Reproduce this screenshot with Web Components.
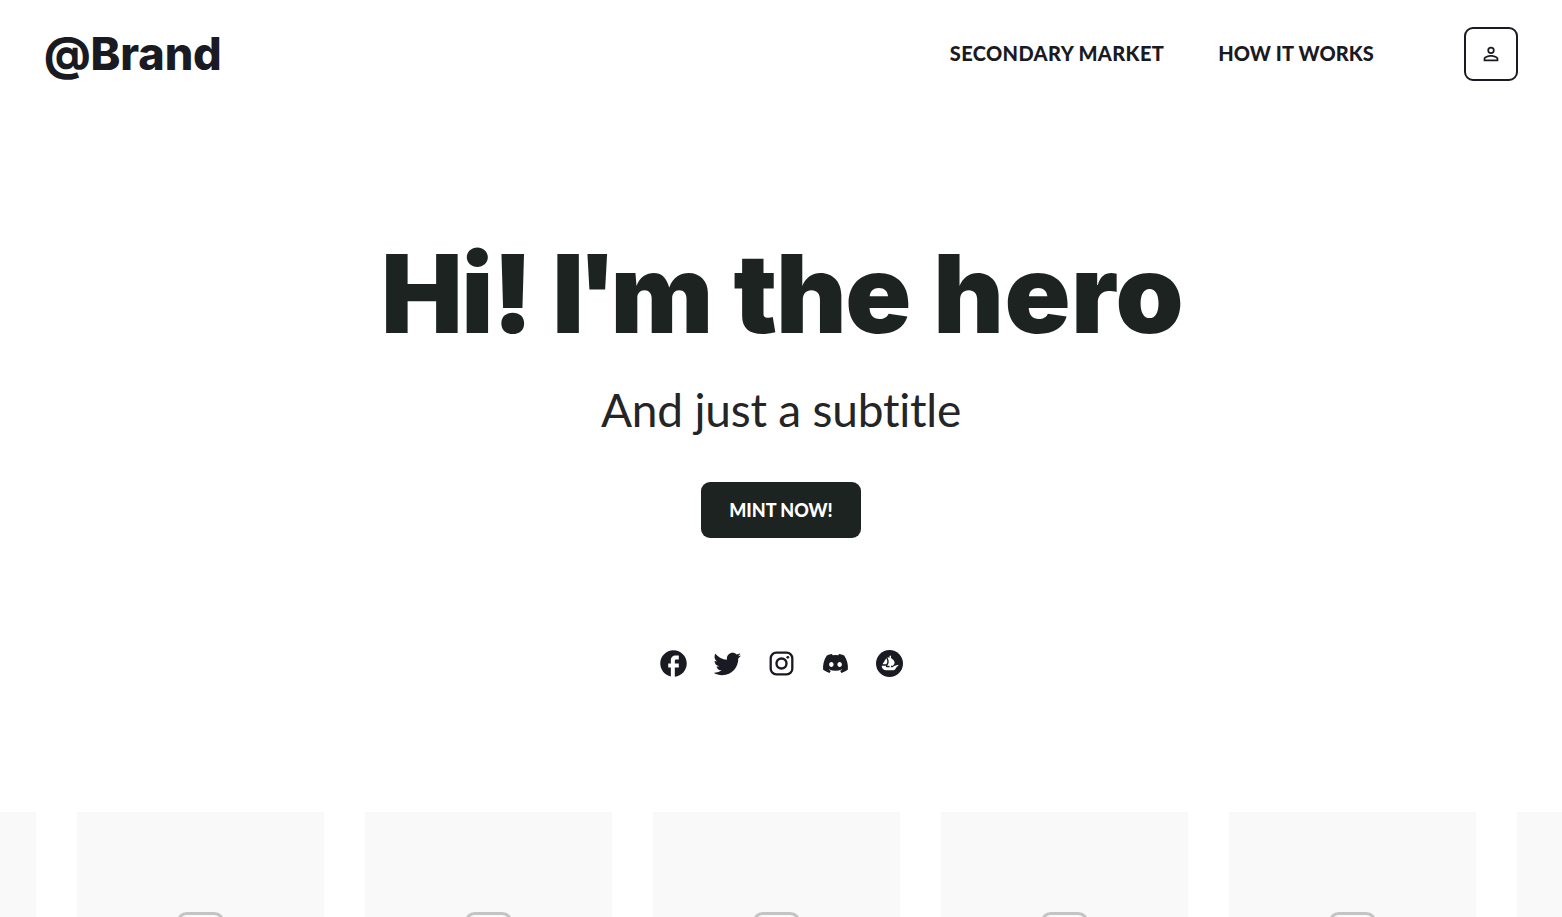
<!DOCTYPE html>
<html lang="en">
<head>
<meta charset="utf-8">
<title>@Brand</title>
<style>
    html, body{
        margin:0;
        height:100%;
        overflow:hidden;
        background-color:#fff;
    }

    body{
        font-family: Lato, "Liberation Sans", sans-serif;
        font-variant-ligatures:none;
        color:#1a1a23;
    }

    .tight{
        letter-spacing:-7px;
        margin-right:7px;
    }

    .loose{
        letter-spacing:0.5px;
        margin-left:3px;
    }
</style>
</head>
<body>

<landing-page>
    <nav-bar slot="header">
        <span slot="brand">@Brand</span>
        <nav-link style="--track:0.37px">SECONDARY MARKET</nav-link>
        <nav-link style="--track:0.12px">HOW IT WORKS</nav-link>
    </nav-bar>
    <hero-banner>
        <span slot="title">Hi! <span class="tight">I'm</span> the <span class="loose">hero</span></span>
        <span slot="subtitle">And just a subtitle</span>
        <mint-button slot="action">MINT NOW!</mint-button>
    </hero-banner>
    <social-links></social-links>
    <card-strip></card-strip>
</landing-page>

<script>
class LandingPage extends HTMLElement {

    constructor() {
        super();
        this.shadow = this.attachShadow({mode: 'open'});
        this.render();
    }

    render() {
        this.shadow.innerHTML =
        `
        <style>
            :host{
                display:flex;
                flex-direction:column;
                height:100vh;
                overflow:hidden;
            }
        </style>
        <slot name="header"></slot>
        <slot></slot>
        `;
    }
}

class NavBar extends HTMLElement {

    constructor() {
        super();
        this.shadow = this.attachShadow({mode: 'open'});
        this.render();
    }

    render() {
        this.shadow.innerHTML =
        `
        <style>
            :host{
                display:flex;
                flex:none;
                align-items:center;
                box-sizing:border-box;
                height:108px;
                padding:0 44px;
            }

            .brand{
                font-family: Inter, sans-serif;
                font-size:45px;
                line-height:54px;
                font-weight:800;
                letter-spacing:-0.1px;
                margin-right:auto;
            }

            nav{
                display:flex;
                gap:54px;
                margin-right:90px;
                padding-bottom:2px;
            }

            button{
                display:flex;
                align-items:center;
                justify-content:center;
                box-sizing:border-box;
                width:54px;
                height:54px;
                padding:0;
                border:2px solid #1a1a23;
                border-radius:9px;
                background:#fff;
                color:#1a1a23;
            }

            svg{
                display:block;
                width:22px;
                height:22px;
            }
        </style>

        <div class="brand"><slot name="brand"></slot></div>
        <nav><slot></slot></nav>
        <button aria-label="Account">
            <svg viewBox="0 0 24 24" fill="currentColor"><path d="M12 5.9a2.1 2.1 0 1 1 0 4.2 2.1 2.1 0 0 1 0-4.2m0 9c2.97 0 6.1 1.46 6.1 2.1v1.1H5.9V17c0-.64 3.13-2.1 6.1-2.1M12 4a4 4 0 1 0 0 8 4 4 0 0 0 0-8m0 9c-2.67 0-8 1.34-8 4v3h16v-3c0-2.66-5.33-4-8-4"/></svg>
        </button>
        `;
    }
}

class NavLink extends HTMLElement {

    constructor() {
        super();
        this.shadow = this.attachShadow({mode: 'open'});
        this.render();
    }

    render() {
        this.shadow.innerHTML =
        `
        <style>
            :host{
                display:block;
                font-size:20px;
                line-height:24px;
                font-weight:900;
                letter-spacing:var(--track, 0);
                white-space:nowrap;
            }
        </style>
        <slot></slot>
        `;
    }
}

class HeroBanner extends HTMLElement {

    constructor() {
        super();
        this.shadow = this.attachShadow({mode: 'open'});
        this.render();
    }

    render() {
        this.shadow.innerHTML =
        `
        <style>
            :host{
                display:flex;
                flex:none;
                flex-direction:column;
                align-items:center;
                padding-top:117px;
            }

            h1{
                margin:0;
                padding-left:3px;
                font-family: Inter, sans-serif;
                font-size:109px;
                line-height:136px;
                font-weight:900;
                letter-spacing:-1.5px;
                color:#1c2321;
                white-space:nowrap;
            }

            p{
                margin:21px 0 0;
                font-size:46px;
                line-height:56px;
                letter-spacing:-0.2px;
                color:#252525;
                white-space:nowrap;
            }

            .action{
                margin-top:44px;
            }
        </style>

        <h1><slot name="title"></slot></h1>
        <p><slot name="subtitle"></slot></p>
        <div class="action"><slot name="action"></slot></div>
        `;
    }
}

class MintButton extends HTMLElement {

    constructor() {
        super();
        this.shadow = this.attachShadow({mode: 'open'});
        this.render();
    }

    render() {
        this.shadow.innerHTML =
        `
        <style>
            :host{
                display:block;
            }

            button{
                display:block;
                width:160px;
                height:56px;
                padding:0;
                border:0;
                border-radius:9px;
                background-color:#1c2321;
                color:#fff;
                font-family: Lato, sans-serif;
                font-size:18px;
                font-weight:900;
                white-space:nowrap;
            }
        </style>
        <button><slot></slot></button>
        `;
    }
}

class SocialLinks extends HTMLElement {

    constructor() {
        super();
        this.shadow = this.attachShadow({mode: 'open'});
        this.render();
    }

    render() {
        this.shadow.innerHTML =
        `
        <style>
            :host{
                display:flex;
                flex:none;
                justify-content:center;
                gap:27px;
                padding:112px 0 135px 1px;
            }

            svg{
                display:block;
                width:27px;
                height:27px;
                fill:#1a1a23;
            }
        </style>

        <svg viewBox="1.8 1.8 20.4 20.4"><path d="M22 12c0-5.52-4.48-10-10-10S2 6.48 2 12c0 4.84 3.44 8.87 8 9.8V15H8v-3h2V9.5C10 7.57 11.57 6 13.5 6H16v3h-2c-.55 0-1 .45-1 1v2h3v3h-3v6.95c5.05-.5 9-4.76 9-9.95z"/></svg>
        <svg viewBox="2 1.9 20.4 20.4"><path d="M22.46 6c-.77.35-1.6.58-2.46.69.88-.53 1.56-1.37 1.88-2.38-.83.5-1.75.85-2.72 1.05C18.37 4.5 17.26 4 16 4c-2.35 0-4.27 1.92-4.27 4.29 0 .34.04.67.11.98C8.28 9.09 5.11 7.38 3 4.79c-.37.63-.58 1.37-.58 2.15 0 1.49.75 2.81 1.91 3.56-.71 0-1.37-.2-1.95-.5v.03c0 2.08 1.48 3.82 3.44 4.21a4.22 4.22 0 0 1-1.93.07 4.28 4.28 0 0 0 4 2.98 8.521 8.521 0 0 1-5.33 1.84c-.34 0-.68-.02-1.02-.06C3.44 20.29 5.7 21 8.12 21 16 21 20.33 14.46 20.33 8.79c0-.19 0-.37-.01-.56.84-.6 1.56-1.36 2.14-2.23z"/></svg>
        <svg viewBox="0 0 27 27">
            <rect x="2.7" y="2.7" width="21.6" height="21.6" rx="5.6" fill="none" stroke="#1a1a23" stroke-width="2.3"/>
            <circle cx="13.5" cy="13.5" r="5" fill="none" stroke="#1a1a23" stroke-width="2.4"/>
            <circle cx="19.8" cy="7.3" r="1.4"/>
        </svg>
        <svg viewBox="-1 -1 26 26"><path d="M20.317 4.37a19.79 19.79 0 0 0-4.885-1.515.074.074 0 0 0-.079.037c-.21.375-.444.865-.608 1.25a18.27 18.27 0 0 0-5.487 0 12.64 12.64 0 0 0-.617-1.25.077.077 0 0 0-.079-.037A19.74 19.74 0 0 0 3.677 4.37a.07.07 0 0 0-.032.027C.533 9.046-.32 13.58.099 18.058a.082.082 0 0 0 .031.056 19.9 19.9 0 0 0 5.993 3.03.078.078 0 0 0 .084-.028c.462-.63.874-1.295 1.226-1.994a.076.076 0 0 0-.042-.106 13.1 13.1 0 0 1-1.872-.892.077.077 0 0 1-.008-.128c.126-.094.252-.192.372-.291a.074.074 0 0 1 .078-.011c3.928 1.793 8.18 1.793 12.061 0a.074.074 0 0 1 .079.01c.12.099.246.198.373.292a.077.077 0 0 1-.007.128c-.598.349-1.22.645-1.873.891a.077.077 0 0 0-.041.107c.36.698.772 1.363 1.225 1.993a.076.076 0 0 0 .084.029 19.84 19.84 0 0 0 6.002-3.03.077.077 0 0 0 .032-.055c.5-5.177-.838-9.674-3.549-13.66a.061.061 0 0 0-.031-.029zM8.02 15.331c-1.183 0-2.157-1.086-2.157-2.419s.956-2.419 2.157-2.419c1.21 0 2.176 1.095 2.157 2.419 0 1.333-.956 2.419-2.157 2.419zm7.975 0c-1.183 0-2.157-1.086-2.157-2.419s.955-2.419 2.157-2.419c1.21 0 2.176 1.095 2.157 2.419 0 1.333-.946 2.419-2.157 2.419z"/></svg>
        <svg viewBox="0 0 24 24">
            <circle cx="12" cy="12" r="12"/>
            <g fill="#fff">
                <path d="M5.92 12.4L9.1 7.44a.1.1 0 0 1 .18.01c.52 1.17.97 2.63.76 3.53-.1.45-.4 1.05-.73 1.54a.1.1 0 0 1-.09.05H6.01a.1.1 0 0 1-.09-.17z"/>
                <path d="M9.9 13.85c.65-.9 1.25-1.9 1.35-3.05.15-1.5-.4-3-1.15-4.35l1.9.45V5.57c0-.38.3-.69.68-.69s.67.31.67.69v1.6c1.4 1 3.2 2.6 3.2 4.1 0 1-.9 2-1.7 2.75h-1.5v1.45H12V14h-2z"/>
                <path d="M5.04 13.9h3.7c0 .9.52 1.5 1.3 1.5h4.4c.6 0 1.15-.6 1.62-1.1l3.77-1.1v.9c-.25.1-1.07.49-1.42.97-.88 1.22-1.55 2.97-3.05 2.97H9.05a4.02 4.02 0 0 1-4.01-4.14z"/>
            </g>
        </svg>
        `;
    }
}

class CardStrip extends HTMLElement {

    constructor() {
        super();
        this.shadow = this.attachShadow({mode: 'open'});
        this.render();
    }

    render() {
        this.shadow.innerHTML =
        `
        <style>
            :host{
                display:flex;
                flex:none;
                gap:41px;
                margin-left:-211px;
            }
        </style>
        ${'<placeholder-card></placeholder-card>'.repeat(7)}
        `;
    }
}

class PlaceholderCard extends HTMLElement {

    constructor() {
        super();
        this.shadow = this.attachShadow({mode: 'open'});
        this.render();
    }

    render() {
        this.shadow.innerHTML =
        `
        <style>
            :host{
                display:flex;
                flex:none;
                align-items:center;
                justify-content:center;
                width:247px;
                height:247px;
                background-color:#f9f9f9;
            }

            svg{
                display:block;
                width:47px;
                height:47px;
            }
        </style>
        <svg viewBox="0 0 47 47" fill="none" stroke="#c4c4c4" stroke-width="3">
            <rect x="1.5" y="1.5" width="44" height="44" rx="8"/>
            <circle cx="15" cy="15" r="4"/>
            <path d="M3 38l13-12 9 9 9-10 11 12"/>
        </svg>
        `;
    }
}

customElements.define('landing-page', LandingPage);
customElements.define('nav-bar', NavBar);
customElements.define('nav-link', NavLink);
customElements.define('hero-banner', HeroBanner);
customElements.define('mint-button', MintButton);
customElements.define('social-links', SocialLinks);
customElements.define('placeholder-card', PlaceholderCard);
customElements.define('card-strip', CardStrip);
</script>
</body>
</html>
